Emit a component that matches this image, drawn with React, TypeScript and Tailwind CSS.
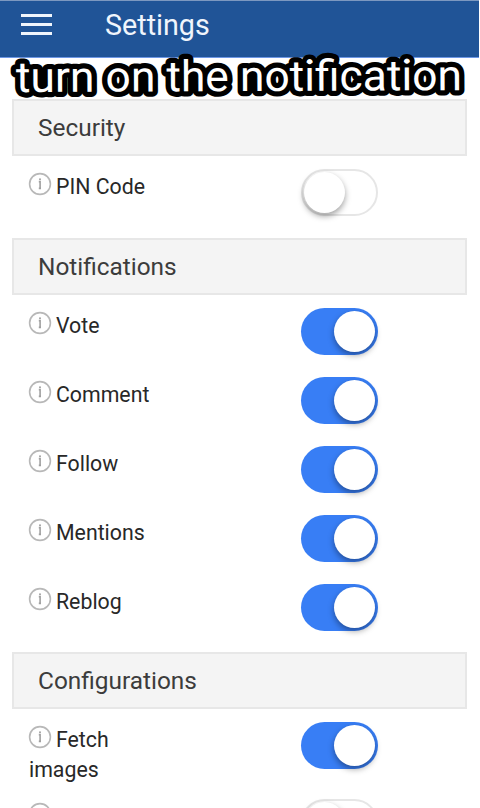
import clsx from "clsx"

type Setting = {
  label: string
  enabled: boolean
  tall?: boolean
}

type Section = {
  title: string
  items: Setting[]
}

const sections: Section[] = [
  {
    title: "Security",
    items: [{ label: "PIN Code", enabled: false }],
  },
  {
    title: "Notifications",
    items: [
      { label: "Vote", enabled: true },
      { label: "Comment", enabled: true },
      { label: "Follow", enabled: true },
      { label: "Mentions", enabled: true },
      { label: "Reblog", enabled: true },
    ],
  },
  {
    title: "Configurations",
    items: [
      { label: "Fetch images", enabled: true, tall: true },
      { label: "Only", enabled: false },
    ],
  },
]

function InfoIcon() {
  return (
    <svg
      viewBox="0 0 24 24"
      className="mr-[3px] inline-block h-6 w-6 -translate-x-px -translate-y-1 align-middle"
      fill="none"
    >
      <circle cx="12" cy="12" r="10.4" stroke="#b8b8b8" strokeWidth="1.6" />
      <path d="M10.8 9.6h1.3v6.8M10.8 16.4h2.2" stroke="#a0a0a0" strokeWidth="1.6" />
      <circle cx="12" cy="7.2" r="1" fill="#a0a0a0" />
    </svg>
  )
}

function Toggle({ enabled, label }: { enabled: boolean; label: string }) {
  return (
    <button
      type="button"
      role="switch"
      aria-checked={enabled}
      aria-label={label}
      className={clsx(
        "flex h-[47px] w-[77px] shrink-0 items-center rounded-full",
        enabled
          ? "justify-end bg-[#387ef5] pr-[3px]"
          : "justify-start border-2 border-[#e6e6e6] bg-white pl-px",
      )}
    >
      <span className="h-[41px] w-[41px] rounded-full bg-white shadow-[0_3px_6px_rgba(0,0,0,0.38)]" />
    </button>
  )
}

export default function App() {
  return (
    <div className="relative flex h-[808px] w-[480px] flex-col overflow-hidden bg-white font-['Roboto',sans-serif]">
      <header className="flex h-[58px] w-[479px] shrink-0 items-start border-b border-t border-b-[#6d97e6] border-t-[#7c98c0] bg-[#205497] pl-[21px] text-white">
        <div className="mt-[13px] flex w-[31px] flex-col gap-[6px]">
          <span className="h-[3px] bg-[#f0f5fc]" />
          <span className="h-[3px] bg-[#f0f5fc]" />
          <span className="h-[3px] bg-[#f0f5fc]" />
        </div>
        <h1 className="ml-[53px] mt-[6px] text-[28.7px] leading-9 text-[#f0f5fc]">Settings</h1>
      </header>

      <main className="ml-3 mt-[41px] w-[455px]">
        {sections.map((section) => (
          <section key={section.title}>
            <h2 className="flex h-[57px] items-center border-2 border-[#e7e7e7] bg-[#f4f4f4] pl-6 pt-px text-[24.4px] text-[#3c3c3c]">
              {section.title}
            </h2>
            <div className={section.items.length > 1 ? "pb-3" : "pb-[13px]"}>
              {section.items.map((item) => (
                <div
                  key={item.label}
                  className={clsx(
                    "flex items-start pl-[17px] pt-[13px]",
                    item.tall ? "h-[77px]" : "h-[69px]",
                  )}
                >
                  <p className="mt-[3px] w-[130px] text-[21.3px] leading-[30px] text-[#282828]">
                    <InfoIcon />
                    {item.label}
                  </p>
                  <div className="ml-[142px]">
                    <Toggle enabled={item.enabled} label={item.label} />
                  </div>
                </div>
              ))}
            </div>
          </section>
        ))}
      </main>

      {/* Caption over the header edge */}
      <svg className="absolute left-0 top-[44px]" width="480" height="64">
        <text
          x="16"
          y="47"
          textLength="446"
          lengthAdjust="spacingAndGlyphs"
          className="fill-white stroke-black font-['Roboto',sans-serif] text-[43px]"
          strokeWidth="10.5"
          strokeLinejoin="round"
          paintOrder="stroke"
          transform="rotate(-0.25 240 28)"
        >
          turn on the notification
        </text>
      </svg>
    </div>
  )
}
